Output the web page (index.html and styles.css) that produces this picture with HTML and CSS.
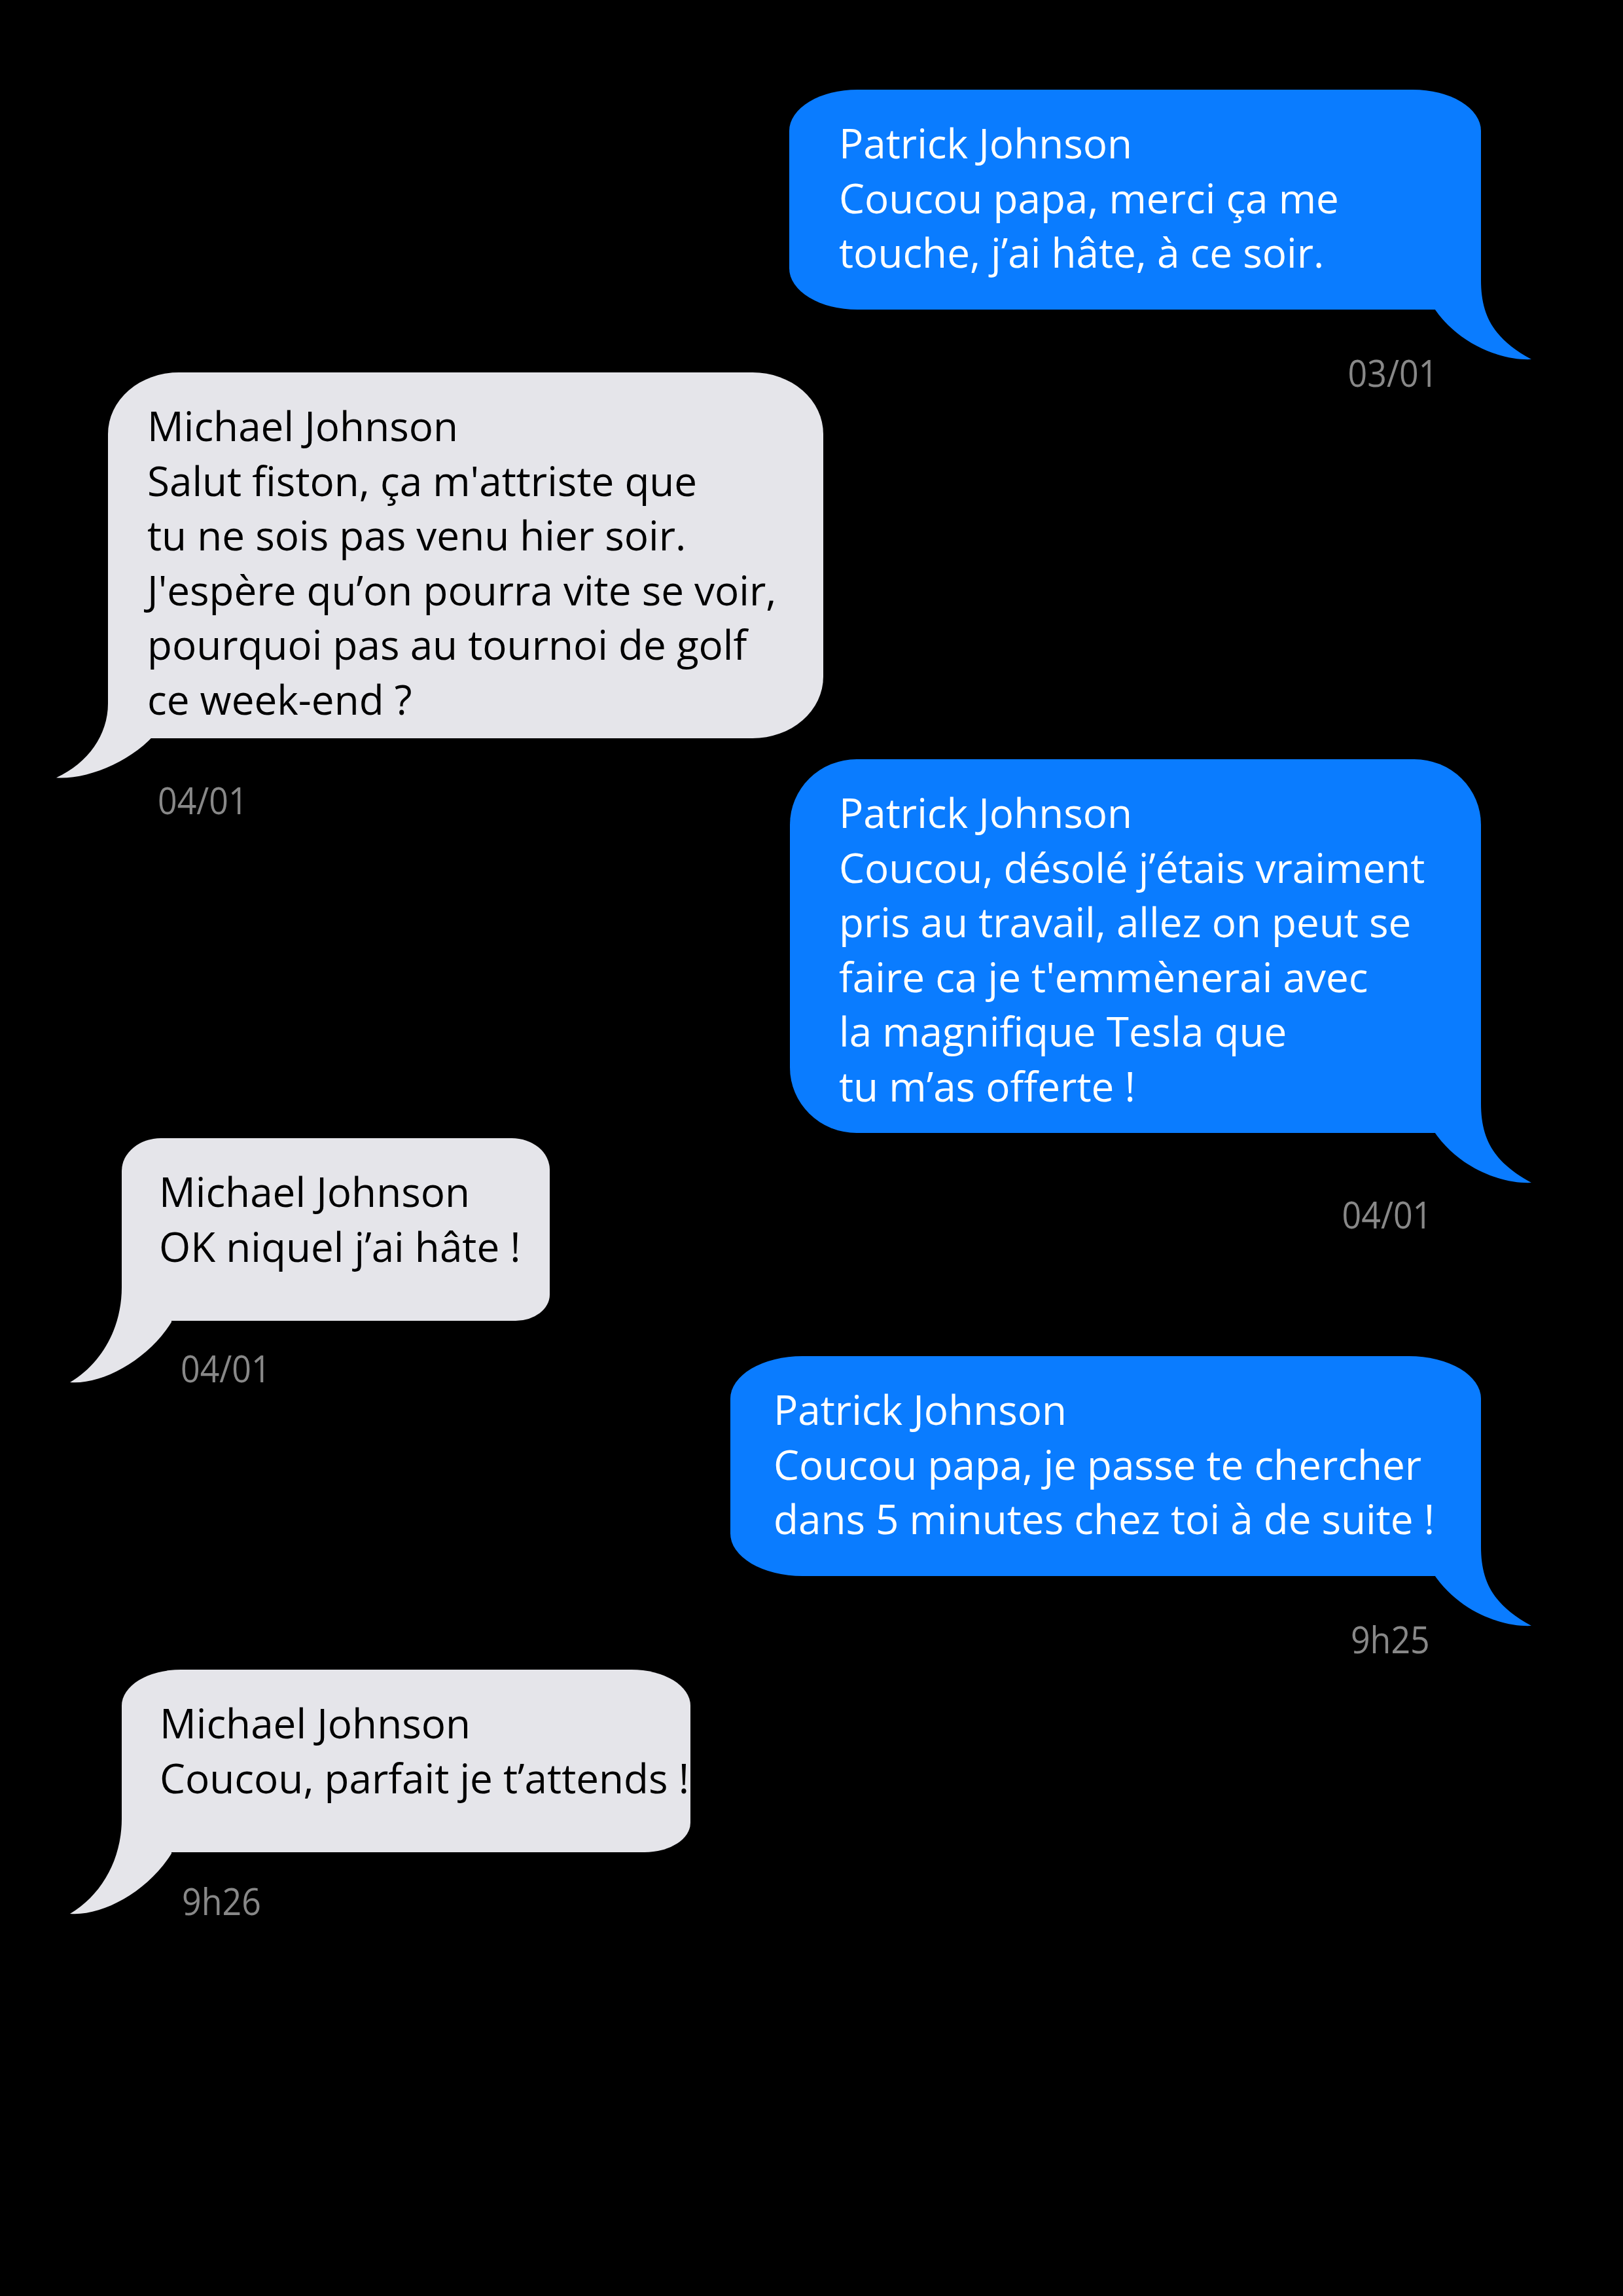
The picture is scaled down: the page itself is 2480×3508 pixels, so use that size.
FILE: index.html
```html
<!DOCTYPE html>
<html lang="fr">
<head>
<meta charset="utf-8">
<title>Messages</title>
<link rel="stylesheet" href="styles.css">
</head>
<body>
<div class="thread">
  <div class="msg out m1">
    <div class="bubble">
      <svg class="tail" viewBox="0 0 170 140" preserveAspectRatio="none"><path d="M90 0 L90 15 C90 70 110 105 167 136 C130 138 60 120 17 56 L17 0 Z"/></svg>
      <p class="line">Patrick Johnson</p>
      <p class="line">Coucou papa, merci ça me<br>touche, j’ai hâte, à ce soir.</p>
    </div>
    <div class="time">03/01</div>
  </div>

  <div class="msg in m2">
    <div class="bubble">
      <svg class="tail" viewBox="0 0 180 160" preserveAspectRatio="none"><path d="M90 0 L90 9 C90 70 60 125 11 154 C60 158 130 120 166 62 L166 0 Z"/></svg>
      <p class="line">Michael Johnson</p>
      <p class="line">Salut fiston, ça m'attriste que<br>tu ne sois pas venu hier soir.<br>J'espère qu’on pourra vite se voir,<br>pourquoi pas au tournoi de golf<br>ce week-end ?</p>
    </div>
    <div class="time">04/01</div>
  </div>

  <div class="msg out m3">
    <div class="bubble">
      <svg class="tail" viewBox="0 0 170 140" preserveAspectRatio="none"><path d="M90 0 L90 15 C90 70 110 105 167 136 C130 138 60 120 17 56 L17 0 Z"/></svg>
      <p class="line">Patrick Johnson</p>
      <p class="line">Coucou, désolé j’étais vraiment<br>pris au travail, allez on peut se<br>faire ca je t'emmènerai avec<br>la magnifique Tesla que<br>tu m’as offerte !</p>
    </div>
    <div class="time">04/01</div>
  </div>

  <div class="msg in m4">
    <div class="bubble">
      <svg class="tail" viewBox="0 0 180 160" preserveAspectRatio="none"><path d="M90 0 L90 9 C90 70 60 125 11 154 C60 158 130 120 166 62 L166 0 Z"/></svg>
      <p class="line">Michael Johnson</p>
      <p class="line">OK niquel j’ai hâte !</p>
    </div>
    <div class="time">04/01</div>
  </div>

  <div class="msg out m5">
    <div class="bubble">
      <svg class="tail" viewBox="0 0 170 140" preserveAspectRatio="none"><path d="M90 0 L90 15 C90 70 110 105 167 136 C130 138 60 120 17 56 L17 0 Z"/></svg>
      <p class="line">Patrick Johnson</p>
      <p class="line">Coucou papa, je passe te chercher<br>dans 5 minutes chez toi à de suite !</p>
    </div>
    <div class="time">9h25</div>
  </div>

  <div class="msg in m6">
    <div class="bubble">
      <svg class="tail" viewBox="0 0 180 160" preserveAspectRatio="none"><path d="M90 0 L90 9 C90 70 60 125 11 154 C60 158 130 120 166 62 L166 0 Z"/></svg>
      <p class="line">Michael Johnson</p>
      <p class="line">Coucou, parfait je t’attends !</p>
    </div>
    <div class="time">9h26</div>
  </div>
</div>
</body>
</html>
```

FILE: styles.css
```css
* {
  box-sizing: border-box;
  margin: 0;
  padding: 0;
}

html,
body {
  background: #000;
}

body {
  width: 2480px;
  min-height: 3508px;
  font-family: "Open Sans", "Noto Sans", sans-serif;
}

.thread {
  display: flex;
  flex-direction: column;
  padding-top: 137px;
}

.msg {
  display: flex;
  flex-direction: column;
}

.msg.out {
  align-items: flex-end;
  padding-right: 217px;
}

.msg.in {
  align-items: flex-start;
  padding-left: 186px;
}

.bubble {
  position: relative;
  font-size: 62px;
  line-height: 83.6px;
  padding-top: 40px;
  white-space: nowrap;
}

.out .bubble {
  background: #0a7cff;
  color: #fff;
}

.in .bubble {
  background: #e5e5ea;
  color: #000;
}

.line {
  display: block;
  position: relative;
  z-index: 1;
}

.tail {
  position: absolute;
  display: block;
  z-index: 0;
}

.out .tail {
  right: -80px;
  bottom: -80px;
  width: 170px;
  height: 140px;
  fill: #0a7cff;
}

.in .tail {
  left: -90px;
  bottom: -100px;
  width: 180px;
  height: 160px;
  fill: #e5e5ea;
}

.time {
  font-size: 57px;
  line-height: 57px;
  color: #888888;
  transform: scaleX(0.91);
  white-space: nowrap;
}

.out .time {
  transform-origin: right center;
}

.in .time {
  transform-origin: left center;
}

/* message 1 */
.m1 .bubble {
  width: 1057px;
  height: 336px;
  padding-left: 76px;
  border-radius: 104px 104px 0 104px / 63px 63px 0 63px;
}

.m1 .time {
  margin-top: 68px;
  margin-right: 66px;
}

/* message 2 */
.msg.m2 {
  margin-top: -29px;
  padding-left: 165px;
}

.m2 .bubble {
  width: 1093px;
  height: 559px;
  padding-left: 60px;
  border-radius: 108px 108px 108px 0 / 94px 94px 94px 0;
}

.m2 .tail {
  height: 125px;
  bottom: -65px;
}

.m2 .time {
  margin-top: 66px;
  margin-left: 76px;
}

/* message 3 */
.m3 {
  margin-top: -91px;
}

.m3 .bubble {
  width: 1056px;
  height: 571px;
  padding-left: 75px;
  border-radius: 102px 102px 0 102px / 100px 100px 0 100px;
}

.m3 .time {
  margin-top: 96px;
  margin-right: 75px;
}

/* message 4 */
.m4 {
  margin-top: -145px;
}

.m4 .bubble {
  width: 654px;
  height: 279px;
  padding-left: 57px;
  border-radius: 60px 58px 52px 0 / 50px 48px 40px 0;
}

.m4 .time {
  margin-top: 44px;
  margin-left: 90px;
}

/* message 5 */
.m5 {
  margin-top: -47px;
}

.m5 .bubble {
  width: 1147px;
  height: 336px;
  padding-left: 66px;
  border-radius: 110px 110px 0 110px / 65px 65px 0 65px;
}

.m5 .time {
  margin-top: 68px;
  margin-right: 78px;
}

/* message 6 */
.m6 {
  margin-top: 18px;
}

.m6 .bubble {
  width: 869px;
  height: 279px;
  padding-left: 58px;
  border-radius: 90px 90px 70px 0 / 55px 55px 45px 0;
}

.m6 .time {
  margin-top: 46px;
  margin-left: 92px;
}
```
